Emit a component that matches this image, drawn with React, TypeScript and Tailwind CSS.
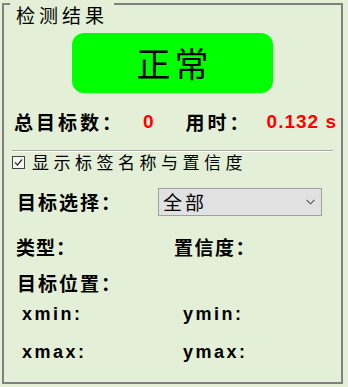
import React from "react";

const cjk = { fontFamily: '"Noto Sans CJK SC", "Noto Sans", sans-serif' };
const mix = { fontFamily: '"Liberation Sans", "Noto Sans CJK SC", sans-serif' };

export default function App() {
  return (
    <div className="w-[348px] h-[387px] bg-[#e3efd7] pt-[3px] pl-[2px]">
      <div className="relative w-[341px] h-[381px] border-2 border-[#808080] flex flex-col">
        <div
          className="absolute left-[6px] top-[-4px] pt-[2px] px-[6px] bg-[#e3efd7] text-[19px] leading-[24px] tracking-[4px] text-black"
          style={cjk}
        >
          检测结果
        </div>

        <div className="mt-[28px] mx-auto w-[201px] h-[60px] rounded-[12px] bg-[#00ff00] flex items-center justify-center">
          <span className="text-[34px] leading-[40px] tracking-[4px] pl-[4px] text-black" style={cjk}>
            正常
          </span>
        </div>

        <div className="mt-[16px] h-[26px] flex items-center text-[19px] leading-[26px] font-bold text-black" style={mix}>
          <span className="ml-[10px] w-[129px] tracking-[3px]" style={cjk}>总目标数：</span>
          <span className="text-[#ff0000]">0</span>
          <span className="ml-[32px] w-[81px] tracking-[3px]" style={cjk}>用时：</span>
          <span className="text-[#ff0000] tracking-[1px]">0.132 s</span>
        </div>

        <div className="mt-[15px] ml-[8px] w-[321px] h-[2px] border-t border-[#a8a8a8] border-b border-b-white" />

        <div className="h-[20px] flex items-center">
          <svg className="ml-[8px]" width="13" height="13" viewBox="0 0 13 13">
            <rect x="0.5" y="0.5" width="12" height="12" fill="#f4f8ef" stroke="#404040" />
            <path d="M3 6.5 L5.5 9 L10 3.5" fill="none" stroke="#303030" strokeWidth="1.2" />
          </svg>
          <span className="ml-[7px] text-[17px] leading-[20px] tracking-[4.5px] text-black" style={cjk}>
            显示标签名称与置信度
          </span>
        </div>

        <div className="mt-[16px] h-[28px] flex items-center">
          <span className="ml-[13px] w-[141px] text-[19px] leading-[26px] font-bold tracking-[2px] text-black" style={cjk}>
            目标选择：
          </span>
          <div className="w-[164px] h-[28px] bg-[#e1e1e1] border border-[#a0a0a0] flex items-center justify-between">
            <span className="ml-[4px] text-[19px] leading-[24px] tracking-[3px] text-black" style={cjk}>全部</span>
            <svg className="mr-[6px]" width="9" height="6" viewBox="0 0 9 6">
              <path d="M0.5 0.8 L4.5 4.8 L8.5 0.8" fill="none" stroke="#505050" strokeWidth="1.1" />
            </svg>
          </div>
        </div>

        <div className="mt-[18px] h-[26px] flex items-center text-[19px] leading-[26px] font-bold text-black" style={cjk}>
          <span className="ml-[12px] w-[158px] tracking-[1px]">类型：</span>
          <span className="tracking-[1.5px]">置信度：</span>
        </div>

        <div className="mt-[10px] h-[26px] flex items-center text-[19px] leading-[26px] font-bold tracking-[2px] text-black" style={cjk}>
          <span className="ml-[13px]">目标位置：</span>
        </div>

        <div className="mt-[6px] h-[24px] flex items-center text-[18px] leading-[24px] font-bold tracking-[2.5px] text-black" style={mix}>
          <span className="ml-[18px] w-[161px]">xmin:</span>
          <span>ymin:</span>
        </div>

        <div className="mt-[14px] h-[24px] flex items-center text-[18px] leading-[24px] font-bold tracking-[2.5px] text-black" style={mix}>
          <span className="ml-[18px] w-[161px]">xmax:</span>
          <span>ymax:</span>
        </div>
      </div>
    </div>
  );
}
